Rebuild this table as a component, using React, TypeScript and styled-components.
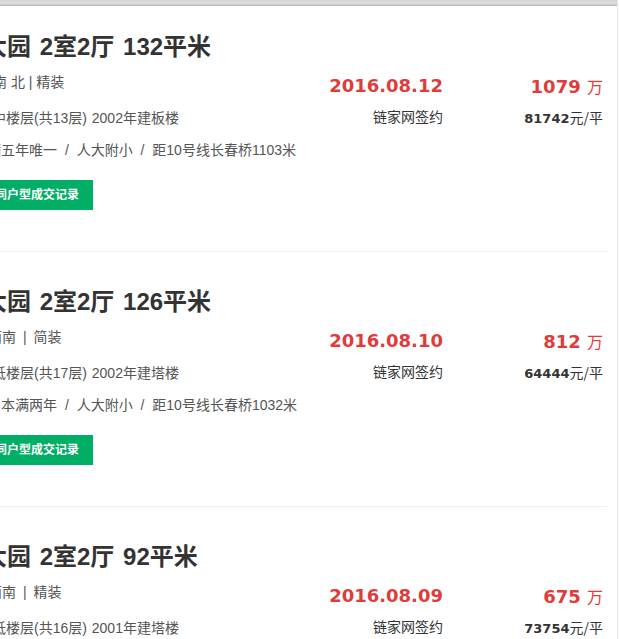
import React from "react";
import styled, { createGlobalStyle } from "styled-components";

const Global = createGlobalStyle`
  html, body { margin: 0; padding: 0; background: #fff; overflow: hidden; }
  body { font-family: "Liberation Sans", "Noto Sans CJK SC", sans-serif; }
`;

const Page = styled.div`
  width: 618px;
  min-height: 639px;
  border-right: 1px solid #e6e6e6;
  box-sizing: border-box;
`;

const TopShade = styled.div`
  height: 6px;
  background: linear-gradient(#d6d6d6, #dcdcdc 60%, #b4b4b4);
`;

const List = styled.ul`
  list-style: none;
  margin: 0;
  padding: 0;
  width: 607px;
`;

const Item = styled.li`
  display: flex;
  align-items: flex-start;
  padding: 35px 4px 41px 0;
  border-bottom: 1px solid #eeeeee;
  &:first-child { padding-top: 26px; }
`;

const Info = styled.div`
  flex: 1;
  min-width: 0;
  white-space: nowrap;
`;

const Title = styled.div<{ $lead: number }>`
  margin-left: ${(p) => p.$lead}px;
  font-size: 24px;
  font-weight: bold;
  line-height: 30px;
  word-spacing: 2px;
  color: #333;
`;

const Line = styled.div<{ $lead: number; $gap: number; $spread?: number }>`
  margin: ${(p) => p.$gap}px 0 0 ${(p) => p.$lead}px;
  font-size: 14px;
  line-height: 20px;
  word-spacing: ${(p) => p.$spread ?? 0}px;
  color: #555;
`;

const RecordButton = styled.a<{ $lead: number }>`
  display: inline-block;
  margin: 20px 0 0 ${(p) => p.$lead}px;
  height: 30px;
  padding: 0 14px 0 10px;
  background: #00ae66;
  color: #fff;
  font-size: 12px;
  font-weight: bold;
  line-height: 30px;
`;

const Col = styled.div<{ $width: number }>`
  width: ${(p) => p.$width}px;
  flex: none;
  text-align: right;
  white-space: nowrap;
  padding-top: 42px;
`;

const BigRed = styled.div`
  font-family: "DejaVu Sans", "Noto Sans CJK SC", sans-serif;
  font-size: 18px;
  font-weight: bold;
  line-height: 24px;
  color: #df3c3c;
`;

const Unit = styled.span`
  font-family: "Noto Sans CJK SC", sans-serif;
  font-size: 16px;
  font-weight: normal;
`;

const Sub = styled.div`
  margin-top: 8px;
  font-family: "Noto Sans CJK SC", sans-serif;
  font-size: 14px;
  line-height: 20px;
  color: #333;
`;

const Num = styled.b`
  font-family: "DejaVu Sans", sans-serif;
  font-size: 13px;
`;

type Deal = {
  title: string;
  facing: string;
  facingLead: number;
  facingSpread: number;
  floor: string;
  tags: string;
  date: string;
  total: string;
  unit: string;
};

const deals: Deal[] = [
  {
    title: "远大园 2室2厅 132平米",
    facing: "南 北 | 精装",
    facingLead: -7,
    facingSpread: 0,
    floor: "中楼层(共13层) 2002年建板楼",
    tags: "满五年唯一 / 人大附小 / 距10号线长春桥1103米",
    date: "2016.08.12",
    total: "1079",
    unit: "81742",
  },
  {
    title: "远大园 2室2厅 126平米",
    facing: "西南 | 简装",
    facingLead: -12,
    facingSpread: 3,
    floor: "低楼层(共17层) 2002年建塔楼",
    tags: "房本满两年 / 人大附小 / 距10号线长春桥1032米",
    date: "2016.08.10",
    total: "812",
    unit: "64444",
  },
  {
    title: "远大园 2室2厅 92平米",
    facing: "西南 | 精装",
    facingLead: -12,
    facingSpread: 3,
    floor: "低楼层(共16层) 2001年建塔楼",
    tags: "房本满两年 / 人大附小 / 距10号线长春桥1032米",
    date: "2016.08.09",
    total: "675",
    unit: "73754",
  },
];

export default function App() {
  return (
    <Page>
      <Global />
      <TopShade />
      <List>
        {deals.map((d) => (
          <Item key={d.date}>
            <Info>
              <Title $lead={-41}>{d.title}</Title>
              <Line $lead={d.facingLead} $gap={10} $spread={d.facingSpread}>
                {d.facing}
              </Line>
              <Line $lead={-8} $gap={16} $spread={1}>{d.floor}</Line>
              <Line $lead={-13} $gap={12} $spread={4}>{d.tags}</Line>
              <RecordButton $lead={-39}>查看同户型成交记录</RecordButton>
            </Info>
            <Col $width={150}>
              <BigRed>{d.date}</BigRed>
              <Sub>链家网签约</Sub>
            </Col>
            <Col $width={160}>
              <BigRed>
                {d.total} <Unit>万</Unit>
              </BigRed>
              <Sub>
                <Num>{d.unit}</Num>元/平
              </Sub>
            </Col>
          </Item>
        ))}
      </List>
    </Page>
  );
}
